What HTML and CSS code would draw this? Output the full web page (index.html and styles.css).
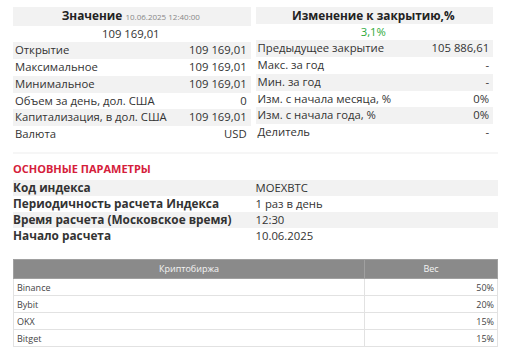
FILE: index.html
```html
<!DOCTYPE html>
<html lang="ru">
<head>
<meta charset="utf-8">
<link rel="stylesheet" href="styles.css">
</head>
<body>
<div class="page">
  <div class="top">
    <div class="half">
      <table class="info">
        <tr class="head"><td colspan="2"><b>Значение</b> <span class="stamp">10.06.2025 12:40:00</span></td></tr>
        <tr class="big"><td colspan="2">109 169,01</td></tr>
        <tr class="alt"><td>Открытие</td><td class="num">109 169,01</td></tr>
        <tr><td>Максимальное</td><td class="num">109 169,01</td></tr>
        <tr class="alt"><td>Минимальное</td><td class="num">109 169,01</td></tr>
        <tr><td>Объем за день, дол. США</td><td class="num">0</td></tr>
        <tr class="alt"><td>Капитализация, в дол. США</td><td class="num">109 169,01</td></tr>
        <tr><td>Валюта</td><td class="num">USD</td></tr>
      </table>
    </div>
    <div class="half">
      <table class="info">
        <tr class="head"><td colspan="2"><b>Изменение к закрытию,%</b></td></tr>
        <tr class="big"><td colspan="2" class="up">3,1%</td></tr>
        <tr class="alt"><td>Предыдущее закрытие</td><td class="num">105 886,61</td></tr>
        <tr><td>Макс. за год</td><td class="num">-</td></tr>
        <tr class="alt"><td>Мин. за год</td><td class="num">-</td></tr>
        <tr><td>Изм. с начала месяца, %</td><td class="num">0%</td></tr>
        <tr class="alt"><td>Изм. с начала года, %</td><td class="num">0%</td></tr>
        <tr><td>Делитель</td><td class="num">-</td></tr>
      </table>
    </div>
  </div>
  <div class="divider"></div>
  <h2 class="section">Основные параметры</h2>
  <table class="params">
    <tr class="alt"><td class="key">Код индекса</td><td>MOEXBTC</td></tr>
    <tr><td class="key">Периодичность расчета Индекса</td><td>1 раз в день</td></tr>
    <tr class="alt"><td class="key">Время расчета (Московское время)</td><td>12:30</td></tr>
    <tr><td class="key">Начало расчета</td><td>10.06.2025</td></tr>
  </table>
  <table class="crypto">
    <thead>
      <tr><th class="c1">Криптобиржа</th><th class="c2">Вес</th></tr>
    </thead>
    <tbody>
      <tr><td>Binance</td><td class="num">50%</td></tr>
      <tr><td>Bybit</td><td class="num">20%</td></tr>
      <tr><td>OKX</td><td class="num">15%</td></tr>
      <tr><td>Bitget</td><td class="num">15%</td></tr>
    </tbody>
  </table>
</div>
</body>
</html>
```

FILE: styles.css
```css
* { box-sizing: border-box; }
html, body { margin: 0; padding: 0; background: #fff; }
body {
  font-family: "Open Sans", "Noto Sans", sans-serif;
  color: #333;
}
.page {
  width: 485px;
  margin-left: 13px;
  padding-top: 7px;
}
.top {
  display: flex;
}
.half {
  width: 50%;
}
.info {
  width: 98%;
  border-collapse: collapse;
  font-size: 11.3px;
}
.info tr { height: 16.7px; }
.info td {
  padding: 0 4px 0 2px;
  line-height: 16.7px;
  white-space: nowrap;
}
.info .alt td, .info .head td { background: #f2f2f2; }
.info .head td { text-align: center; color: #222; font-size: 11.8px; }
.info .head b { font-weight: 700; }
.stamp { font-size: 8px; color: #888; }
.info .big td { text-align: center; }
.info .up { color: #2eaa3a; }
.num { text-align: right; }
.divider {
  height: 2px;
  background: #f6f6f6;
  margin-top: 9px;
}
.section {
  margin: 8px 0 4px;
  font-size: 11px;
  line-height: 14px;
  font-weight: 700;
  text-transform: uppercase;
  color: #d5203b;
}
.params {
  width: 100%;
  border-collapse: collapse;
  font-size: 11.3px;
}
.params tr { height: 16px; }
.params td {
  padding: 0;
  height: 16px;
  line-height: 15px;
  white-space: nowrap;
}
.params .key { width: 50%; font-weight: 700; font-size: 11.8px; color: #333; }
.params .alt td { background: #f2f2f2; }
.crypto {
  width: 100%;
  margin-top: 15px;
  border-collapse: collapse;
  font-size: 9px;
  border: 1px solid #e2e2e2;
}
.crypto th {
  background: #8a8a8a;
  color: #f4f4f4;
  font-weight: 400;
  height: 19px;
  padding: 0;
  text-align: center;
  border: 1px solid #a0a0a0;
}
.crypto .c1 { width: 351px; }
.crypto td {
  height: 17px;
  padding: 1px 3px 0;
  border: 1px solid #e2e2e2;
  color: #444;
}
```
